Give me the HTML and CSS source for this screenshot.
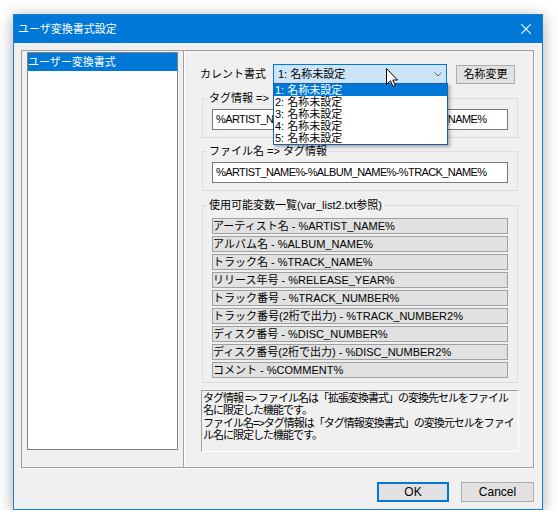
FILE: index.html
```html
<!DOCTYPE html>
<html lang="ja">
<head>
<meta charset="utf-8">
<title>ユーザ変換書式設定</title>
<link rel="stylesheet" href="styles.css">
</head>
<body>
<div class="window">
  <div class="titlebar">
    <span class="title">ユーザ変換書式設定</span>
    <svg class="close" width="10" height="10" viewBox="0 0 10 10"><path d="M0 0L10 10M10 0L0 10" stroke="#fff" stroke-width="1.1" fill="none"/></svg>
  </div>
  <div class="client">
    <div class="frame">
      <div class="leftpane">
        <div class="tree">
          <div class="tree-item sel">ユーザー変換書式</div>
        </div>
      </div>
      <div class="rightpane">
        <div class="row-current">
          <span class="lbl">カレント書式</span>
          <div class="combo-wrap">
            <div class="combo">
              <span>1: 名称未設定</span>
              <svg class="chev" width="8" height="5" viewBox="0 0 8 5"><path d="M0.5 0.5L4 4L7.5 0.5" fill="none" stroke="#606060"/></svg>
            </div>
            <ul class="dropdown">
              <li class="sel">1: 名称未設定</li>
              <li>2: 名称未設定</li>
              <li>3: 名称未設定</li>
              <li>4: 名称未設定</li>
              <li>5: 名称未設定</li>
            </ul>
            <svg class="cursor" width="13" height="20" viewBox="0 0 13 20"><path d="M0.5 0.5V16.5L4.5 12.8L7 18.5L9.3 17.5L6.8 12H11.5Z" fill="#fff" stroke="#000" stroke-width="1" stroke-linejoin="miter"/></svg>
          </div>
          <button class="btn btn-rename">名称変更</button>
        </div>
        <fieldset class="group g1">
          <legend>タグ情報 =&gt; ファイル名</legend>
          <div class="edit">%ARTIST_NAME%-%ALBUM_NAME%-%TRACK_NAME%</div>
        </fieldset>
        <fieldset class="group g2">
          <legend>ファイル名 =&gt; タグ情報</legend>
          <div class="edit">%ARTIST_NAME%-%ALBUM_NAME%-%TRACK_NAME%</div>
        </fieldset>
        <fieldset class="group g3">
          <legend>使用可能変数一覧(var_list2.txt参照)</legend>
          <div class="var-list">
            <div class="var">アーティスト名 - %ARTIST_NAME%</div>
            <div class="var">アルバム名 - %ALBUM_NAME%</div>
            <div class="var">トラック名 - %TRACK_NAME%</div>
            <div class="var">リリース年号 - %RELEASE_YEAR%</div>
            <div class="var">トラック番号 - %TRACK_NUMBER%</div>
            <div class="var">トラック番号(2桁で出力) - %TRACK_NUMBER2%</div>
            <div class="var">ディスク番号 - %DISC_NUMBER%</div>
            <div class="var">ディスク番号(2桁で出力) - %DISC_NUMBER2%</div>
            <div class="var">コメント - %COMMENT%</div>
          </div>
        </fieldset>
        <div class="desc">タグ情報 =&gt; ファイル名は「拡張変換書式」の変換先セルをファイル<br>名に限定した機能です。<br>ファイル名=&gt;タグ情報は「タグ情報変換書式」の変換元セルをファイ<br>ル名に限定した機能です。</div>
      </div>
    </div>
    <div class="buttons">
      <button class="btn btn-ok">OK</button>
      <button class="btn btn-cancel">Cancel</button>
    </div>
  </div>
</div>
</body>
</html>
```
FILE: styles.css
```css
* { box-sizing: border-box; }
body {
  margin: 0;
  padding: 14px 0 0 13px;
  background: #fff;
  font-family: "Liberation Sans", "Noto Sans CJK JP", sans-serif;
  font-size: 11px;
  color: #000;
}
.window {
  width: 530px;
  height: 496px;
  border: 1px solid #1a80d6;
  background: #f0f0f0;
  box-shadow: 0 3px 14px rgba(0, 0, 0, 0.35);
  display: flex;
  flex-direction: column;
}
.titlebar {
  height: 28px;
  background: #0078d7;
  color: #fff;
  display: flex;
  align-items: center;
  justify-content: space-between;
  padding: 0 11px 0 4px;
  flex: none;
}
.title { font-size: 11px; line-height: 14px; }
.close { display: block; }
.client {
  flex: 1;
  display: flex;
  flex-direction: column;
  padding: 7px 8px 7px 7px;
}
.frame {
  height: 418px;
  border: 1px solid #a0a0a0;
  box-shadow: 1px 1px 0 #fff;
  display: flex;
  flex: none;
}
.leftpane {
  width: 162px;
  padding: 1px 5px 17px 5px;
  border-right: 1px solid #a0a0a0;
  display: flex;
}
.tree {
  flex: 1;
  background: #fff;
  border: 1px solid #828282;
}
.tree-item {
  height: 18px;
  line-height: 18px;
  white-space: nowrap;
}
.tree-item.sel { background: #0078d7; color: #fff; }
.rightpane {
  flex: 1;
  border-left: 1px solid #fff;
  display: flex;
  flex-direction: column;
}
.row-current {
  display: flex;
  align-items: center;
  margin: 13px 0 0 15px;
  height: 20px;
}
.lbl { width: 73px; line-height: 14px; }
.combo-wrap { position: relative; width: 174px; height: 20px; }
.combo {
  height: 20px;
  border: 1px solid #0078d7;
  background: #cce4f7;
  display: flex;
  align-items: center;
  justify-content: space-between;
  padding: 0 4px 0 4px;
  line-height: 14px;
}
.chev { display: block; }
.dropdown {
  position: absolute;
  left: 0;
  top: 19px;
  width: 175px;
  margin: 0;
  padding: 0;
  list-style: none;
  background: #fff;
  border: 1px solid #1c5fa8;
  box-shadow: 2px 2px 3px rgba(0, 0, 0, 0.3);
  z-index: 5;
}
.dropdown li { height: 12px; line-height: 12px; padding-left: 1px; white-space: nowrap; }
.dropdown li.sel { background: #0078d7; color: #fff; }
.cursor { position: absolute; left: 113px; top: 4px; z-index: 6; overflow: visible; }
.btn {
  background: #e1e1e1;
  border: 1px solid #adadad;
  font: inherit;
  color: #000;
  padding: 0;
  margin: 0;
  line-height: 14px;
}
.btn-rename { margin-left: 9px; width: 59px; height: 19px; }
.group {
  margin: 0 0 0 17px;
  width: 316px;
  border: 1px solid #dcdcdc;
  padding: 5px 9px 7px 9px;
  min-width: 0;
}
.group legend {
  padding: 0 2px;
  margin-left: -5px;
  line-height: 12px;
  white-space: nowrap;
}
.g1 { margin-top: 8px; }
.g2 { margin-top: 7px; }
.g3 { margin-top: 8px; padding: 7px 9px 4px 9px; }
.edit {
  height: 21px;
  background: #fff;
  border: 1px solid #7a7a7a;
  padding: 0 3px;
  line-height: 19px;
  white-space: nowrap;
  overflow: hidden;
  letter-spacing: -0.6px;
}
.var-list { display: flex; flex-direction: column; gap: 2px; }
.var {
  height: 16px;
  line-height: 14px;
  background: #e1e1e1;
  border: 1px solid #a0a0a0;
  white-space: nowrap;
  overflow: hidden;
}
.desc {
  margin: 7px 0 0 16px;
  width: 318px;
  height: 62px;
  border: 1px solid;
  border-color: #a0a0a0 #fff #fff #a0a0a0;
  padding: 1px 0 0 1px;
  line-height: 12.3px;
  letter-spacing: -1px;
  white-space: nowrap;
  overflow: hidden;
}
.buttons {
  display: flex;
  justify-content: flex-end;
  gap: 12px;
  margin-top: 14px;
}
.buttons .btn { height: 20px; font-size: 12px; }
.btn-ok { width: 72px; border: 2px solid #0078d7; }
.btn-cancel { width: 73px; }
```
